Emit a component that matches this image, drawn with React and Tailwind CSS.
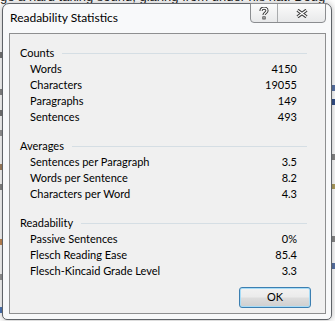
import React from "react";

const counts = [
  ["Words", "4150"],
  ["Characters", "19055"],
  ["Paragraphs", "149"],
  ["Sentences", "493"],
];

const averages = [
  ["Sentences per Paragraph", "3.5"],
  ["Words per Sentence", "8.2"],
  ["Characters per Word", "4.3"],
];

const readability = [
  ["Passive Sentences", "0%"],
  ["Flesch Reading Ease", "85.4"],
  ["Flesch-Kincaid Grade Level", "3.3"],
];

const Section = ({ title, rows, className }) => (
  <div className={className}>
    {/* header with rule */}
    <div className="flex items-center h-[16px] pl-[10px] pr-[18px]">
      <span>{title}</span>
      <div className="flex-1 ml-[8px] h-px bg-[#d5dee4]" />
    </div>
    {rows.map(([label, value]) => (
      <div key={label} className="flex justify-between items-center h-[16px] pl-[20px] pr-[28px]">
        <span>{label}</span>
        <span>{value}</span>
      </div>
    ))}
  </div>
);

const HelpGlyph = () => (
  <svg width="10" height="13" viewBox="0 0 10 13">
    <path d="M2 4 C2 2 3.3 1.2 5 1.2 C6.8 1.2 8 2.3 8 3.8 C8 5.6 5 5.8 5 8" fill="none" stroke="#3a3a3a" strokeWidth="3.2" />
    <rect x="3.4" y="9.4" width="3.2" height="3" fill="#3a3a3a" />
    <path d="M2 4 C2 2 3.3 1.2 5 1.2 C6.8 1.2 8 2.3 8 3.8 C8 5.6 5 5.8 5 8" fill="none" stroke="#fff" strokeWidth="1.2" />
    <rect x="4.4" y="10.2" width="1.2" height="1.4" fill="#fff" />
  </svg>
);

const CloseGlyph = () => (
  <svg width="12" height="9" viewBox="0 0 12 9">
    <path d="M1.5 1.2 L10.5 7.8 M10.5 1.2 L1.5 7.8" stroke="#3a3a3a" strokeWidth="3.4" />
    <path d="M1.5 1.2 L10.5 7.8 M10.5 1.2 L1.5 7.8" stroke="#fff" strokeWidth="1.3" />
  </svg>
);

export default function App() {
  return (
    <div className="relative w-[335px] h-[321px] overflow-hidden bg-white font-[family-name:Lato,sans-serif] text-[11px] text-black">
      {/* document behind the dialog: only its edges show */}
      <div className="h-[5px] overflow-hidden">
        <p className="-mt-[13px] whitespace-nowrap text-[13px] leading-[20px] text-[#1a1a1a] font-[family-name:'Liberation_Sans',sans-serif]">
          ge a hard taking sound, glaring from under his hat. Doug
        </p>
      </div>
      <div className="flex justify-between">
        <div className="flex flex-col w-[2px]">
          <div className="mt-[47px] h-[6px] bg-[#777]" />
          <div className="mt-[31px] h-[6px] bg-[#888]" />
          <div className="mt-[15px] h-[6px] bg-[#777]" />
          <div className="mt-[14px] h-[6px] bg-[#999]" />
          <div className="mt-[28px] h-[6px] bg-[#a58360]" />
          <div className="mt-[14px] h-[6px] bg-[#888]" />
          <div className="mt-[49px] h-[6px] bg-[#c48a55]" />
          <div className="mt-[29px] h-[6px] bg-[#999]" />
          <div className="mt-[27px] h-[6px] bg-[#4f78b8]" />
        </div>
        <div className="flex flex-col w-[3px]">
          <div className="mt-[80px] h-[6px] bg-[#5a74a6]" />
          <div className="mt-[8px] h-[6px] bg-[#34508a]" />
          <div className="mt-[49px] h-[6px] bg-[#888]" />
          <div className="mt-[24px] h-[5px] bg-[#b0a060]" />
          <div className="mt-[47px] h-[6px] bg-[#888]" />
          <div className="mt-[21px] h-[6px] bg-[#5a74a6]" />
        </div>
      </div>

      {/* dialog window */}
      <div className="absolute left-[2px] top-[3px] w-[330px] h-[317px] flex flex-col rounded-t-[7px] rounded-b-[5px] border border-[#5f6368] bg-[#f8f9fa] shadow-[0_0_7px_rgba(0,0,0,0.3)]">
        {/* caption buttons */}
        <div className="absolute right-[5px] -top-px flex h-[20px] rounded-b-[4px] border border-[#8b8d90] bg-[linear-gradient(#fbfbfb,#e8e9ea)] overflow-hidden">
          <div className="w-[27px] flex items-center justify-center border-r border-[#a9abad]">
            <HelpGlyph />
          </div>
          <div className="w-[47px] flex items-center justify-center">
            <CloseGlyph />
          </div>
        </div>

        <div className="h-[29px] pl-[7px] pt-[5px] text-[12px]">Readability Statistics</div>

        {/* client area */}
        <div className="flex-1 flex flex-col ml-[6px] mr-[5px] mb-[5px] border border-[#8e8f90] bg-[#f0f0f0] pt-[11px]">
          <Section title="Counts" rows={counts} />
          <Section title="Averages" rows={averages} className="mt-[13px]" />
          <Section title="Readability" rows={readability} className="mt-[13px]" />

          <div className="flex justify-end mt-[8px] pr-[14px]">
            <button className="w-[72px] h-[21px] rounded-[3px] border border-[#3c7fb1] shadow-[inset_0_0_0_1px_#a7dcf7] bg-[linear-gradient(#f2f2f2_0%,#ebebeb_48%,#dddddd_52%,#cfcfcf_100%)] text-[11px]">
              OK
            </button>
          </div>
        </div>
      </div>
    </div>
  );
}
